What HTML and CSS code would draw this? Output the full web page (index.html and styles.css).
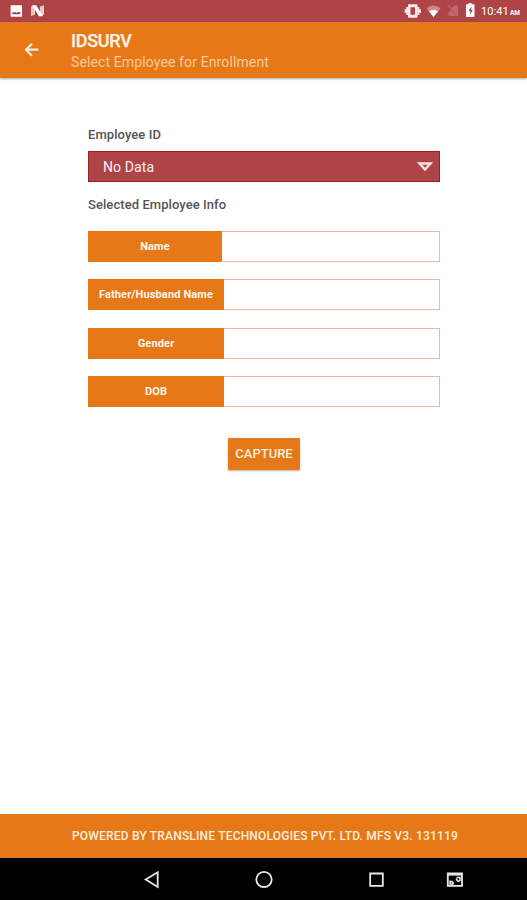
FILE: index.html
```html
<!DOCTYPE html>
<html lang="en">
<head>
<meta charset="utf-8">
<title>IDSURV</title>
<link rel="stylesheet" href="styles.css">
</head>
<body>
<div class="status">
  <svg class="status-left" width="50" height="22" viewBox="0 0 50 22">
    <path fill="#fff" fill-rule="evenodd" d="M11.300 5.300h10q.7 0 .7.700v10q0 .7-.7.700h-10q-.7 0-.7-.700V6q0-.7.7-.700zM12.300 14.300h8v-2l-1.700-.500-1.800 1-1.800-.8-2.700.500z"/>
    <path fill="#e8c6c9" d="M31 6.500l4-1.200v9.500l-4 1.200zM40 6.500l4-1.200v9.500l-4 1.200z"/>
    <path fill="#fff" d="M32 5.300h4.200l7 11h-4.200z"/>
  </svg>
  <svg class="status-right" width="76" height="22" viewBox="402 0 76 22">
    <path fill="#fbe9e7" fill-rule="evenodd" d="M409 4.300h7.500q1 0 1 1v11.400q0 1-1 1H409q-1 0-1-1V5.300q0-1 1-1zM410.500 7.200h4.500v7.600h-4.500z"/>
    <path stroke="#fbe9e7" stroke-width="2" fill="none" d="M407.300 7v8M418.300 7v8M405.600 9.300v3.400M420 9.300v3.400"/>
    <path fill="#d2878b" d="M426.500 8.300q7-5.500 14 0l-7 8.700z"/>
    <path fill="#fff" d="M429 11.300q4.500-3.200 9 0l-4.500 5.700z"/>
    <path fill="#c0696e" d="M458 5.500V16h-8.500l-2-2 6.500-8.500z"/>
    <path stroke="#ad4448" stroke-width="1.500" d="M447 5.500L459 17"/>
    <path stroke="#c97b7f" stroke-width="1" d="M447.500 5L458.500 16.500"/>
    <path fill="#fff" fill-rule="evenodd" d="M468.500 3h3v1.300h2.200q.8 0 .8.800v11q0 .9-.8.900h-6.900q-.8 0-.8-.900v-11q0-.8.800-.8h1.700zM471.500 6.500l-3 4.500h1.700V14.500l2.600-4.500h-1.500z"/>
  </svg>
  <span class="clock">10:41<small>AM</small></span>
</div>
<header class="appbar">
  <svg class="back" width="16" height="16" viewBox="0 0 16 16"><path d="M8 1.700L2 7.700l6 6M2.300 7.700H14.500" fill="none" stroke="#ffeadb" stroke-width="2.200"/></svg>
  <div>
    <h1>IDSURV</h1>
    <p class="subtitle">Select Employee for Enrollment</p>
  </div>
</header>
<main>
  <h2 class="label-id">Employee ID</h2>
  <div class="select"><span>No Data</span>
    <svg width="16" height="10" viewBox="0 0 16 10"><path d="M2.500 1.500h11L8 7.500z" fill="none" stroke="#ffe3e0" stroke-width="2.400"/></svg>
  </div>
  <h2 class="label-info">Selected Employee Info</h2>
  <div class="row first"><div class="key name">Name</div><div class="value"></div></div>
  <div class="row"><div class="key father">Father/Husband Name</div><div class="value"></div></div>
  <div class="row"><div class="key gender">Gender</div><div class="value"></div></div>
  <div class="row"><div class="key dob">DOB</div><div class="value"></div></div>
  <button class="capture">CAPTURE</button>
</main>
<footer class="powered"><span>POWERED BY TRANSLINE TECHNOLOGIES PVT. LTD. MFS V3. 131119</span></footer>
<nav class="nav">
  <svg width="527" height="42" viewBox="0 858 527 42" fill="none" stroke="#e8e8e8" stroke-width="1.800">
    <path d="M157.700 872.300v14.600L145.700 879.600z"/>
    <circle cx="264" cy="879.500" r="7.700"/>
    <path d="M370.200 873.500h12.600v12.300h-12.600z"/>
    <path d="M447.800 873.500h14.200v12.300h-14.200z"/>
    <path fill="#e8e8e8" stroke="none" d="M447.500 873h15v2.600h-15z"/>
    <path stroke-width="1.500" d="M456.500 877.500h3.500v3.500M456.300 878.500q.5 2.800 3.200 3M450 880.500v3.500h3.500M450.500 881.200q2.800.3 3 3"/>
  </svg>
</nav>
</body>
</html>
```
FILE: styles.css
```css
* { box-sizing: border-box; }
body {
  margin: 0;
  height: 900px;
  display: flex;
  flex-direction: column;
  overflow: hidden;
  background: #fff;
  font-family: Roboto, "Liberation Sans", sans-serif;
}
h1, h2, p { margin: 0; white-space: nowrap; }
svg { display: block; }
.status {
  height: 22px;
  flex: none;
  display: flex;
  background: #ad4448;
  color: #fff;
}
.status-right { margin-left: 352px; }
.clock { margin-left: 3px; font-size: 11px; line-height: 23px; letter-spacing: 0.1px; white-space: nowrap; }
.clock small { font-size: 6.5px; font-weight: 700; margin-left: 1px; }
.appbar {
  height: 56px;
  flex: none;
  display: flex;
  background: #e67817;
  box-shadow: 0 1px 2px rgba(0, 0, 0, 0.35);
}
.back { margin: 20px 31px 0 24px; }
h1 { margin-top: 8px; font-size: 18px; line-height: 22px; font-weight: 500; letter-spacing: -0.3px; color: #fff3e8; -webkit-text-stroke: 0.25px #fff3e8; }
.subtitle { font-size: 14px; line-height: 21px; letter-spacing: 0.12px; color: #fbc99c; }
main { flex: 1; padding: 46px 87px 0 88px; }
h2 { font-size: 13px; line-height: 21px; font-weight: 500; letter-spacing: 0.07px; color: #555; }
.select {
  height: 31px;
  margin-top: 6px;
  padding: 0 6px 0 14px;
  display: flex;
  align-items: center;
  justify-content: space-between;
  background: #ad4448;
  border: 1px solid #a51c22;
  color: #fff0ee;
  font-size: 14px;
  letter-spacing: 0.1px;
}
.label-info { margin-top: 12px; }
.row {
  height: 31px;
  margin-top: 17.3px;
  display: flex;
}
.row.first { margin-top: 16px; }
.key {
  width: 136px;
  flex: none;
  background: #e67817;
  color: #fff6ee;
  font-size: 11px;
  line-height: 31px;
  font-weight: 700;
  letter-spacing: 0.14px;
  text-align: center;
  white-space: nowrap;
}
.key.name { width: 134px; }
.value { flex: 1; border: 1px solid #efb5a0; border-left: 0; }
.capture {
  display: block;
  width: 72px;
  height: 32px;
  margin: 31px 0 0 140px;
  padding: 0;
  border: 0;
  border-radius: 1px;
  background: #e67817;
  box-shadow: 0 1px 2px rgba(0, 0, 0, 0.3);
  color: #ffeedd;
  font: 500 13px Roboto, sans-serif;
}
.powered {
  height: 44px;
  flex: none;
  background: #e67817;
  color: #ffeedd;
  font-size: 12px;
  font-weight: 500;
  line-height: 45px;
  letter-spacing: 0.19px;
  padding-left: 72px;
  white-space: nowrap;
}
.nav { height: 42px; flex: none; background: #000; }
```
